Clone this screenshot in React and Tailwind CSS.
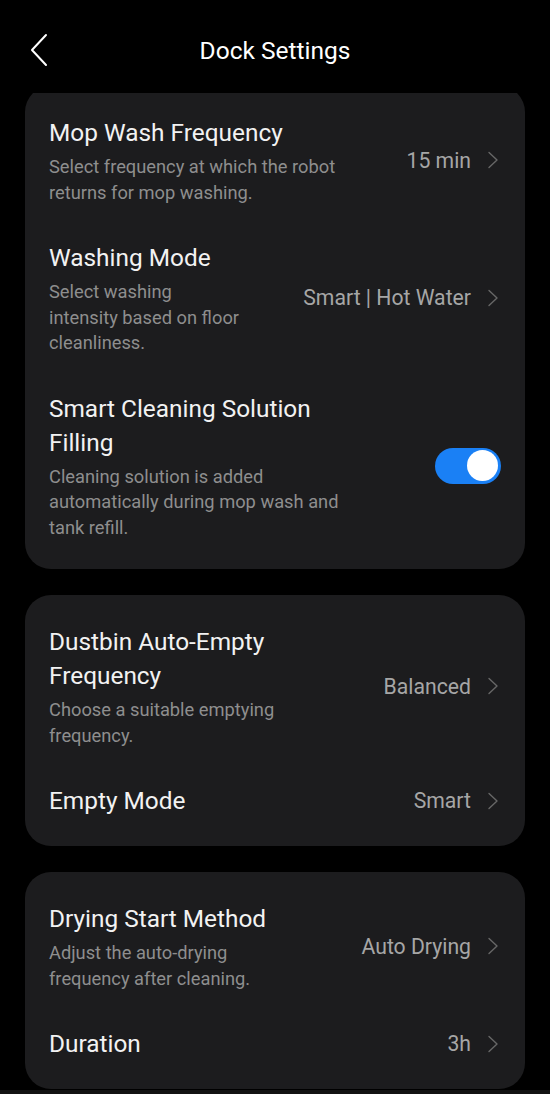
const FONT = { fontFamily: "Roboto, 'Noto Sans', sans-serif" };

// thin chevron used after every value
function Chevron() {
  return (
    <svg width="12" height="18" viewBox="0 0 12 18" fill="none" className="shrink-0">
      <path d="M2 1.5 L10 9 L2 16.5" stroke="#676767" strokeWidth="1.4" strokeLinecap="round" strokeLinejoin="round" />
    </svg>
  );
}

// one settings row: title + description on the left, value or toggle on the right
function Row({ title, desc, value, toggle }) {
  return (
    <div className="flex items-center justify-between px-6 py-[18px]">
      <div className="flex flex-col">
        <div className="text-[24.4px] leading-[34px] text-[#f2f2f2]">
          {title.map((line, i) => (
            <div key={i}>{line}</div>
          ))}
        </div>
        {desc && (
          <div className="mt-1 text-[18.3px] leading-[25.5px] text-[#8e8e8e]">
            {desc.map((line, i) => (
              <div key={i}>{line}</div>
            ))}
          </div>
        )}
      </div>

      {toggle ? (
        <div className="flex h-9 w-[66px] shrink-0 items-center justify-end rounded-full bg-[#1a80f5] pr-[3px]">
          <div className="h-[31px] w-[31px] rounded-full bg-white" />
        </div>
      ) : (
        <div className="flex shrink-0 items-center gap-[16px] pr-[2px]">
          <span className="whitespace-nowrap text-[21.2px] text-[#a6a6a6]">{value}</span>
          <Chevron />
        </div>
      )}
    </div>
  );
}

export default function App() {
  return (
    <div className="flex h-[1094px] w-[550px] flex-col bg-black" style={FONT}>
      {/* Header */}
      <div className="relative flex h-[93px] shrink-0 items-start justify-center pt-[34px]">
        <svg
          className="absolute left-[28px] top-[33px]"
          width="22"
          height="34"
          viewBox="0 0 22 34"
          fill="none"
        >
          <path d="M18 2 L4 17 L18 32" stroke="white" strokeWidth="2" strokeLinecap="round" strokeLinejoin="round" />
        </svg>
        <h1 className="text-[24.5px] leading-[34px] text-white">Dock Settings</h1>
      </div>

      {/* Scroll area */}
      <div className="flex-1 overflow-hidden">
        <div className="mx-[25px] -mt-[7px] flex flex-col gap-[26px]">
          <div className="rounded-[26px] bg-[#1c1c1e] pb-[11px] pt-[12px]">
            <Row
              title={["Mop Wash Frequency"]}
              desc={["Select frequency at which the robot", "returns for mop washing."]}
              value="15 min"
            />
            <Row
              title={["Washing Mode"]}
              desc={["Select washing", "intensity based on floor", "cleanliness."]}
              value="Smart | Hot Water"
            />
            <Row
              title={["Smart Cleaning Solution", "Filling"]}
              desc={["Cleaning solution is added", "automatically during mop wash and", "tank refill."]}
              toggle
            />
          </div>

          <div className="rounded-[26px] bg-[#1c1c1e] pb-[10px] pt-[12px]">
            <Row
              title={["Dustbin Auto-Empty", "Frequency"]}
              desc={["Choose a suitable emptying", "frequency."]}
              value="Balanced"
            />
            <Row title={["Empty Mode"]} value="Smart" />
          </div>

          <div className="rounded-[26px] bg-[#1c1c1e] pb-[10px] pt-[12px]">
            <Row
              title={["Drying Start Method"]}
              desc={["Adjust the auto-drying", "frequency after cleaning."]}
              value="Auto Drying"
            />
            <Row title={["Duration"]} value="3h" />
          </div>
        </div>
      </div>

      {/* bottom nav strip */}
      <div className="h-[4px] shrink-0 bg-[#121212]" />
    </div>
  );
}
